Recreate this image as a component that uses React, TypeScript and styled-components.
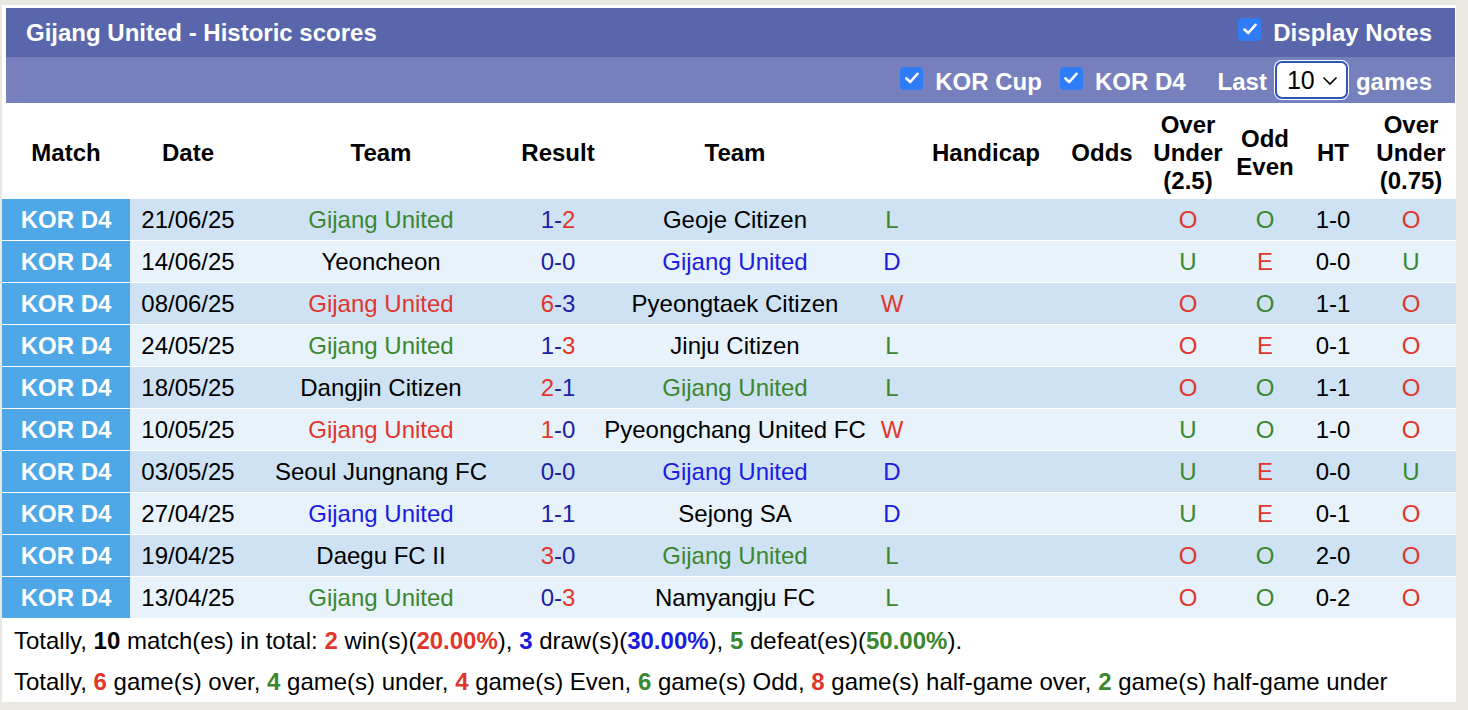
import React from "react";
import styled, { createGlobalStyle } from "styled-components";

const GlobalStyle = createGlobalStyle`
  body {
    margin: 0;
    background: #e9e8e3;
    font-family: "Liberation Sans", Arial, sans-serif;
  }
`;

const RED = "#e0362c";
const GREEN = "#3a872f";
const BLUE = "#1c1ce0";
const NAVY = "#1e1ea6";

const Page = styled.div`
  width: 1454px;
  margin: 5px 0 0 2px;
  background: #fff;
  padding-top: 3px;
`;

const TitleBar = styled.div`
  margin: 0 1px 0 4px;
  height: 49px;
  background: #5966ac;
  display: flex;
  align-items: center;
  justify-content: space-between;
  padding: 0 23px 0 20px;
  color: #fff;
  font-weight: bold;
  font-size: 24px;
`;

const FilterBar = styled.div`
  margin: 0 1px 0 4px;
  height: 46px;
  box-sizing: border-box;
  padding: 3px 23px 0 20px;
  background: #7580bd;
  display: flex;
  align-items: center;
  justify-content: flex-end;
  color: #fff;
  font-weight: bold;
  font-size: 24px;
`;

const Check = styled.label<{ $gap?: number }>`
  display: flex;
  align-items: center;
  gap: 12px;
  margin-left: ${(p) => p.$gap ?? 0}px;
`;

const Box = styled.span`
  width: 23px;
  height: 23px;
  border-radius: 4px;
  background: #2f7df6;
  display: flex;
  align-items: center;
  justify-content: center;
  margin-top: -7px;
`;

const Label = styled.span<{ $gap?: number }>`
  margin-left: ${(p) => p.$gap ?? 0}px;
`;

const SelectWrap = styled.div`
  position: relative;
  margin: -3px 8px 0 8px;
  width: 73px;
  height: 38px;
  box-sizing: border-box;
  border: 2px solid #2c56b3;
  border-radius: 7px;
  background: #fff;
  color: #000;
  font-weight: normal;
  font-size: 25px;
  display: flex;
  align-items: center;
  padding-left: 10px;
  box-shadow: 0 0 0 1px #fff;
`;

const Chevron = styled.svg`
  position: absolute;
  right: 8px;
  top: 13px;
`;

const Table = styled.table`
  width: 1454px;
  border-collapse: collapse;
  table-layout: fixed;
  font-size: 24px;
`;

const Th = styled.th<{ $w: number }>`
  width: ${(p) => p.$w}px;
  height: 93px;
  padding: 3px 0 0;
  font-weight: bold;
  line-height: 28px;
  text-align: center;
  color: #000;
`;

const Row = styled.tr<{ $odd: boolean }>`
  background: ${(p) => (p.$odd ? "#cfe2f3" : "#e8f2fa")};
`;

const Td = styled.td<{ $c?: string }>`
  height: 41px;
  padding: 0;
  text-align: center;
  border-bottom: 1px solid #fff;
  color: ${(p) => p.$c ?? "#000"};
  white-space: nowrap;
`;

const MatchTd = styled(Td)`
  background: #4ea7e6;
  color: #fff;
  font-weight: bold;
`;

const Summary = styled.div`
  padding: 1px 12px 0;
  font-size: 24px;
  color: #000;
`;

const Line = styled.div`
  height: 41px;
  line-height: 41px;
  white-space: nowrap;
`;

const B = styled.b<{ $c?: string }>`
  color: ${(p) => p.$c ?? "#000"};
`;

type R = {
  date: string;
  home: string;
  hc: string;
  s: [number, number];
  away: string;
  ac: string;
  res: string;
  ou: string;
  oe: string;
  ht: string;
  ou2: string;
};

const rows: R[] = [
  { date: "21/06/25", home: "Gijang United", hc: GREEN, s: [1, 2], away: "Geoje Citizen", ac: "#000", res: "L", ou: "O", oe: "O", ht: "1-0", ou2: "O" },
  { date: "14/06/25", home: "Yeoncheon", hc: "#000", s: [0, 0], away: "Gijang United", ac: BLUE, res: "D", ou: "U", oe: "E", ht: "0-0", ou2: "U" },
  { date: "08/06/25", home: "Gijang United", hc: RED, s: [6, 3], away: "Pyeongtaek Citizen", ac: "#000", res: "W", ou: "O", oe: "O", ht: "1-1", ou2: "O" },
  { date: "24/05/25", home: "Gijang United", hc: GREEN, s: [1, 3], away: "Jinju Citizen", ac: "#000", res: "L", ou: "O", oe: "E", ht: "0-1", ou2: "O" },
  { date: "18/05/25", home: "Dangjin Citizen", hc: "#000", s: [2, 1], away: "Gijang United", ac: GREEN, res: "L", ou: "O", oe: "O", ht: "1-1", ou2: "O" },
  { date: "10/05/25", home: "Gijang United", hc: RED, s: [1, 0], away: "Pyeongchang United FC", ac: "#000", res: "W", ou: "U", oe: "O", ht: "1-0", ou2: "O" },
  { date: "03/05/25", home: "Seoul Jungnang FC", hc: "#000", s: [0, 0], away: "Gijang United", ac: BLUE, res: "D", ou: "U", oe: "E", ht: "0-0", ou2: "U" },
  { date: "27/04/25", home: "Gijang United", hc: BLUE, s: [1, 1], away: "Sejong SA", ac: "#000", res: "D", ou: "U", oe: "E", ht: "0-1", ou2: "O" },
  { date: "19/04/25", home: "Daegu FC II", hc: "#000", s: [3, 0], away: "Gijang United", ac: GREEN, res: "L", ou: "O", oe: "O", ht: "2-0", ou2: "O" },
  { date: "13/04/25", home: "Gijang United", hc: GREEN, s: [0, 3], away: "Namyangju FC", ac: "#000", res: "L", ou: "O", oe: "O", ht: "0-2", ou2: "O" },
];

const resColor = (r: string) => (r === "W" ? RED : r === "D" ? BLUE : GREEN);
const ouColor = (v: string) => (v === "O" ? RED : GREEN);
const oeColor = (v: string) => (v === "E" ? RED : GREEN);

const Score = ({ s }: { s: [number, number] }) => {
  const [a, b] = s;
  return (
    <span style={{ color: NAVY }}>
      <span style={{ color: a > b ? RED : NAVY }}>{a}</span>-
      <span style={{ color: b > a ? RED : NAVY }}>{b}</span>
    </span>
  );
};

const Tick = () => (
  <svg width="14" height="12" viewBox="0 0 14 12">
    <path d="M1.5 6.5 L5.2 10 L12.5 1.8" fill="none" stroke="#fff" strokeWidth="2.6" strokeLinecap="round" strokeLinejoin="round" />
  </svg>
);

const App = () => {
  return (
    <Page>
      <GlobalStyle />
      <TitleBar>
        <span>Gijang United - Historic scores</span>
        <Check>
          <Box>
            <Tick />
          </Box>
          Display Notes
        </Check>
      </TitleBar>
      <FilterBar>
        <Check>
          <Box>
            <Tick />
          </Box>
          KOR Cup
        </Check>
        <Check $gap={18}>
          <Box>
            <Tick />
          </Box>
          KOR D4
        </Check>
        <Label $gap={32}>Last</Label>
        <SelectWrap>
          10
          <Chevron width="16" height="10" viewBox="0 0 16 10">
            <path d="M1.5 1.5 L8 8 L14.5 1.5" fill="none" stroke="#000" strokeWidth="1.6" />
          </Chevron>
        </SelectWrap>
        <Label>games</Label>
      </FilterBar>
      <Table>
        <thead>
          <tr>
            <Th $w={128}>Match</Th>
            <Th $w={116}>Date</Th>
            <Th $w={270}>Team</Th>
            <Th $w={84}>Result</Th>
            <Th $w={270}>Team</Th>
            <Th $w={44}></Th>
            <Th $w={144}>Handicap</Th>
            <Th $w={88}>Odds</Th>
            <Th $w={84}>
              Over
              <br />
              Under
              <br />
              (2.5)
            </Th>
            <Th $w={70}>
              Odd
              <br />
              Even
            </Th>
            <Th $w={66}>HT</Th>
            <Th $w={90}>
              Over
              <br />
              Under
              <br />
              (0.75)
            </Th>
          </tr>
        </thead>
        <tbody>
          {rows.map((r, i) => (
            <Row key={r.date} $odd={i % 2 === 0}>
              <MatchTd>KOR D4</MatchTd>
              <Td>{r.date}</Td>
              <Td $c={r.hc}>{r.home}</Td>
              <Td>
                <Score s={r.s} />
              </Td>
              <Td $c={r.ac}>{r.away}</Td>
              <Td $c={resColor(r.res)}>{r.res}</Td>
              <Td></Td>
              <Td></Td>
              <Td $c={ouColor(r.ou)}>{r.ou}</Td>
              <Td $c={oeColor(r.oe)}>{r.oe}</Td>
              <Td>{r.ht}</Td>
              <Td $c={ouColor(r.ou2)}>{r.ou2}</Td>
            </Row>
          ))}
        </tbody>
      </Table>
      <Summary>
        <Line>
          Totally, <B>10</B> match(es) in total: <B $c={RED}>2</B> win(s)(<B $c={RED}>20.00%</B>),{" "}
          <B $c={BLUE}>3</B> draw(s)(<B $c={BLUE}>30.00%</B>), <B $c={GREEN}>5</B> defeat(es)(
          <B $c={GREEN}>50.00%</B>).
        </Line>
        <Line>
          Totally, <B $c={RED}>6</B> game(s) over, <B $c={GREEN}>4</B> game(s) under, <B $c={RED}>4</B> game(s) Even,{" "}
          <B $c={GREEN}>6</B> game(s) Odd, <B $c={RED}>8</B> game(s) half-game over, <B $c={GREEN}>2</B> game(s)
          half-game under
        </Line>
      </Summary>
    </Page>
  );
};

export default App;
